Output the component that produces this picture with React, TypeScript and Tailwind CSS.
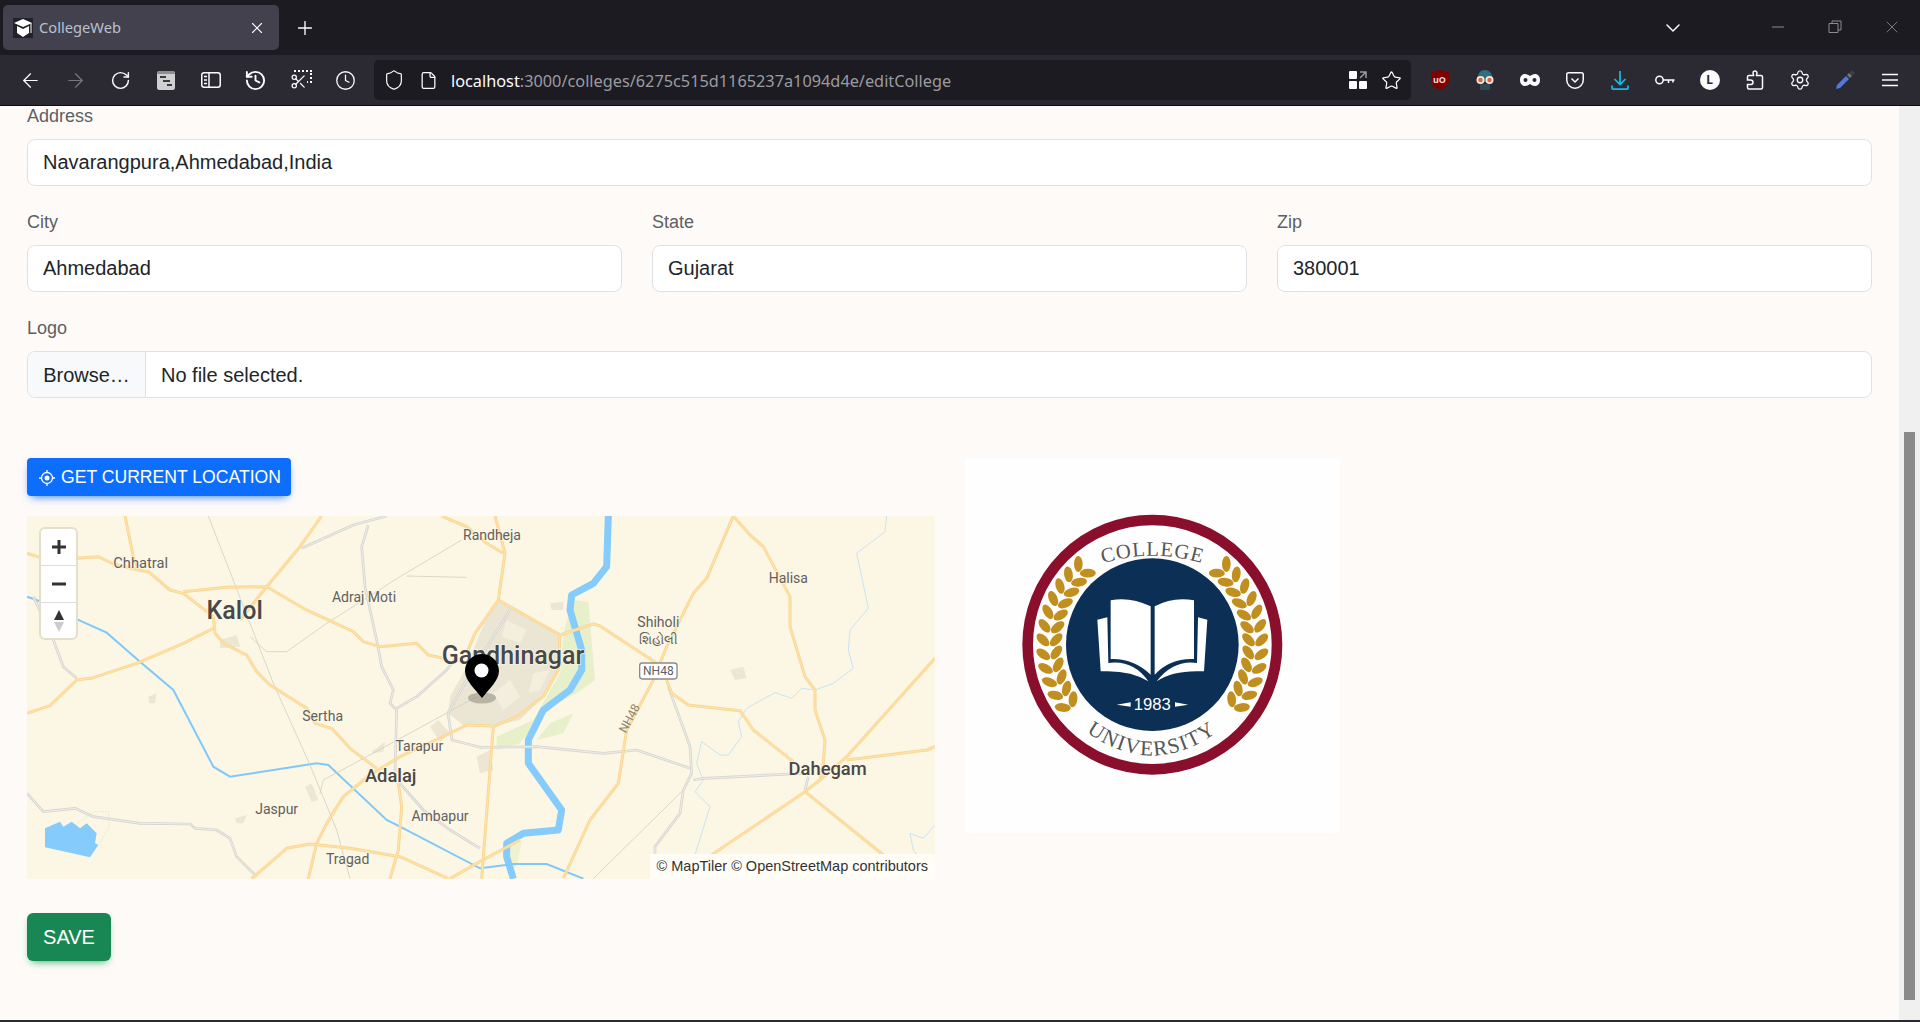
import type { ReactNode } from 'react'
import { ArrowLeft, ArrowRight, ChevronDown, Clock, File, History, Plus, RotateCw, Scissors, Settings, Shield, Star, X } from 'lucide-react'

const YELLOW_LEFT = [
  'M375,228 L400,350 L415,390 L445,395 L510,450 L550,460 L640,530',
  'M81,340 L130,355 L230,355 L295,350 L340,372 L415,390',
  'M965,228 L900,320 L800,440 L720,540',
  'M550,455 L680,442 L800,440 L910,505 L1060,575 L1090,605 L1140,620 L1250,610 L1285,645 L1330,655',
  'M81,820 L150,797 L230,720 L280,713 L410,670 L550,610 L640,565',
  'M640,530 L645,580 L670,610 L740,645 L770,695 L810,735 L920,805 L945,850 L995,865 L1050,925 L1130,985',
  'M1110,1005 L1200,950 L1340,885 L1400,855 L1476,858',
  'M1110,1005 L1030,1070 L980,1150 L950,1210 L925,1316',
  'M1195,1030 L1205,1100 L1195,1230 L1170,1316',
  'M755,1316 L860,1225 L930,1212 L1050,1225 L1200,1250 L1345,1316',
  'M1560,1200 L1440,1265 L1350,1316',
  'M1325,228 L1400,260 L1460,310 L1510,340',
  'M1485,228 L1515,340 L1495,480',
  'M1495,480 L1680,585 L1675,690 L1630,770 L1550,830 L1480,860',
  'M1495,480 L1425,580 L1400,640',
  'M1480,860 L1445,1316',
]

const YELLOW_RIGHT = [
  'M760,48 L680,235 L640,280 L560,440 L520,540 L440,690 L415,850 L330,960 L250,1135',
  'M760,48 L810,105 L850,140 L930,290 L930,380 L975,530 L1005,570 L1005,630 L1035,720 L1030,790 L1020,840 L975,875 L680,1075 L620,1135',
  'M240,405 L340,372 L360,378 L530,490',
  'M560,540 L575,580 L625,615 L780,632 L820,690 L940,785',
  'M975,875 L1210,1065 L1335,1135',
  'M1365,475 L1100,770 L1020,840',
  'M1100,780 L1340,750 L1365,740',
]

const GREY_ROADS = [
  'M1160,228 L1060,255 L905,325',
  'M1105,255 L1085,320 L1095,440 L1130,600 L1145,680 L1180,750 L1170,790 L1190,810 L1185,1000',
  'M1190,805 L1250,770 L1340,690 L1370,650',
  'M81,1060 L130,1115 L225,1105 L280,1130 L420,1150 L570,1152 L585,1165 L650,1170 L690,1195 L710,1250 L770,1310',
  'M100,470 L160,600 L190,680 L230,715',
  'M1200,1030 L1270,1110 L1350,1170 L1440,1225',
  'M1530,510 L1395,729 L1344,819 L1356,900 L1440,922',
  'M1440,922 L1610,920 L1810,940 L1910,930 L2070,985',
  'M2005,740 L2070,920 L2075,1000 L2050,1050 L2040,1120 L1965,1220 L1965,1316',
  'M2080,1020 L2110,1015 L2410,1000',
  'M2415,1050 L2425,1010',
]

const THIN_ROADS = [
  'M625,228 L820,730 L930,975 L1010,1170 L1050,1316',
  'M1385,300 L1200,410 L980,550 L860,635 L800,635 L750,590',
  'M1220,408 L1400,412',
  'M1430,770 L1100,950 L970,1020 L960,1060',
  'M2050,1050 L1780,1316',
]

const STREAMS = [
  'M2660,228 L2655,275 L2570,340 L2585,410 L2605,505 L2550,570 L2545,630 L2560,685 L2500,730 L2445,750 L2405,745 L2375,775 L2325,758 L2240,805 L2215,845 L2225,890 L2185,945 L2160,945 L2105,905 L2090,970 L2110,1020 L2085,1055 L2130,1100 L2080,1260 L2010,1310',
  'M2805,1155 L2770,1195 L2730,1180 L2740,1230 L2775,1280',
]

const TOWNS = [
  { name: 'Chhatral', x: 422, y: 368, size: 44 },
  { name: 'Kalol', x: 704, y: 512, size: 75, dark: true },
  { name: 'Adraj Moti', x: 1092, y: 470, size: 42 },
  { name: 'Sertha', x: 968, y: 829, size: 42 },
  { name: 'Tarapur', x: 1258, y: 917, size: 42 },
  { name: 'Adalaj', x: 1172, y: 1008, size: 55, dark: true },
  { name: 'Jaspur', x: 830, y: 1106, size: 42 },
  { name: 'Ambapur', x: 1320, y: 1127, size: 42 },
  { name: 'Tragad', x: 1043, y: 1258, size: 42 },
  { name: 'Randheja', x: 1476, y: 285, size: 42 },
  { name: 'Gandhinagar', x: 1539, y: 645, size: 75, dark: true },
  { name: 'Halisa', x: 2365, y: 414, size: 42 },
  { name: 'Shiholi', x: 1975, y: 545, size: 42 },
  { name: 'શિહોલી', x: 1975, y: 598, size: 40 },
  { name: 'Dahegam', x: 2483, y: 986, size: 55, dark: true },
]

function MapDrawing() {
  return (
    <svg viewBox="81 228 2724 1089" className="block h-[363px] w-[908px]">
      <rect x="81" y="228" width="2724" height="1089" fill="#fcf7e4" />
      {/* land use */}
      <path d="M1720,480 L1765,485 L1785,720 L1730,760 L1630,810 L1600,860 L1560,910 L1490,930 L1490,890 L1600,840 L1680,700 L1690,580 Z" fill="#e7f0cb" />
      <path d="M1650,850 L1720,820 L1690,880 L1610,900 Z" fill="#e7f0cb" />
      <path d="M1530,1210 L1565,1205 L1550,1280 L1525,1290 Z" fill="#eef2d0" />
      <path d="M1494,480 L1680,579 L1674,699 L1620,780 L1560,840 L1476,858 L1389,855 L1344,819 L1350,770 L1400,680 L1460,530 Z" fill="#ebe5d3" />
      <path d="M1520,540 L1580,570 L1560,610 L1505,590 Z M1600,700 L1650,690 L1620,750 L1585,760 Z M1480,760 L1530,720 L1560,770 L1510,810 Z" fill="#f3eedd" />
      <path d="M1290,860 L1315,840 L1350,880 L1320,905 Z M1115,935 L1155,905 L1150,935 L1120,940 Z M1430,950 L1470,930 L1480,990 L1440,1000 Z M660,600 L710,585 L720,620 L660,625 Z M445,770 L470,760 L465,790 L448,790 Z M915,1040 L935,1030 L955,1080 L935,1085 Z M705,1135 L740,1125 L730,1150 L710,1150 Z M2190,690 L2230,680 L2240,715 L2205,720 Z" fill="#ece6d3" />
      <path d="M1650,490 L1690,485 L1690,510 L1655,510 Z" fill="#ece6d3" />
      {/* water */}
      <path d="M135,1165 L180,1145 L190,1160 L215,1145 L240,1165 L260,1150 L290,1180 L285,1210 L295,1215 L270,1252 L135,1222 Z" fill="#85cbfb" />
      <path d="M225,1155 L280,1115 L325,1115 L328,1160 L295,1215" fill="none" stroke="#c9e3a8" strokeWidth="2" strokeDasharray="4 4" />
      {STREAMS.map((d) => <path key={d} d={d} fill="none" stroke="#c8e4f4" strokeWidth="3" />)}
      <path d="M1825,228 L1820,380 L1780,430 L1715,465 L1710,510 L1745,630 L1745,690 L1710,750 L1630,810 L1585,900 L1585,970 L1685,1110 L1675,1170 L1570,1180 L1520,1210 L1520,1250 L1540,1316" fill="none" stroke="#85cbfb" strokeWidth="21" strokeLinejoin="round" />
      <path d="M81,470 L110,480 L225,535 L320,578 L420,665 L520,750 L640,980 L690,1010 L950,970 L985,975 L1160,1140 L1200,1160 L1440,1285 L1540,1272 L1640,1272 L1750,1316" fill="none" stroke="#80c8f8" strokeWidth="6" />
      {/* roads */}
      {THIN_ROADS.map((d) => <path key={d} d={d} fill="none" stroke="#d2d0c4" strokeWidth="2.5" />)}
      {GREY_ROADS.map((d) => (
        <g key={d}>
          <path d={d} fill="none" stroke="#d4d4d2" strokeWidth="8" strokeLinejoin="round" />
          <path d={d} fill="none" stroke="#f0eee6" strokeWidth="3" strokeLinejoin="round" />
        </g>
      ))}
      {YELLOW_LEFT.map((d) => (
        <g key={d}>
          <path d={d} fill="none" stroke="#f8d694" strokeWidth="9" strokeLinejoin="round" />
          <path d={d} fill="none" stroke="#ffe2a6" strokeWidth="4" strokeLinejoin="round" />
        </g>
      ))}
      <g transform="translate(1440 180)">
        {YELLOW_RIGHT.map((d) => (
          <g key={d}>
            <path d={d} fill="none" stroke="#f8d694" strokeWidth="9" strokeLinejoin="round" />
            <path d={d} fill="none" stroke="#ffe2a6" strokeWidth="4" strokeLinejoin="round" />
          </g>
        ))}
      </g>
      {/* labels */}
      {TOWNS.map((t) => (
        <text
          key={t.name}
          x={t.x}
          y={t.y}
          dy=".35em"
          textAnchor="middle"
          fontFamily="Roboto, 'Noto Sans', sans-serif"
          fontSize={t.size}
          fontWeight={t.dark ? 500 : 400}
          fill={t.dark ? '#484848' : '#606060'}
          stroke="#fcf7e4"
          strokeOpacity=".8"
          strokeWidth="5"
          paintOrder="stroke"
        >
          {t.name}
        </text>
      ))}
      <rect x="1919" y="669" width="112" height="48" rx="8" fill="#fff" stroke="#8b8b8b" strokeWidth="4" />
      <text x="1975" y="693" dy=".35em" textAnchor="middle" fontFamily="Roboto, sans-serif" fontSize="36" fill="#5f5f5f">NH48</text>
      <text x="1888" y="835" dy=".35em" textAnchor="middle" fontFamily="Roboto, sans-serif" fontSize="36" fill="#8d8672" transform="rotate(-62 1888 835)">NH48</text>
    </svg>
  )
}

function ZoomControls() {
  return (
    <div className="absolute left-[12px] top-[11px] flex w-[39px] flex-col rounded-[6px] border-2 border-[#e4dfcd] bg-white">
      <div className="flex h-[37px] items-center justify-center border-b border-[#ddd]">
        <svg width="16" height="16" viewBox="0 0 16 16"><path d="M8 1v14M1 8h14" stroke="#333" strokeWidth="3" /></svg>
      </div>
      <div className="flex h-[37px] items-center justify-center border-b border-[#ddd]">
        <svg width="16" height="16" viewBox="0 0 16 16"><path d="M1 8h14" stroke="#333" strokeWidth="3" /></svg>
      </div>
      <div className="flex h-[35px] items-center justify-center">
        <svg width="12" height="24" viewBox="0 0 12 24">
          <path d="M6 1l5 10H1z" fill="#333" />
          <path d="M6 23l5-10H1z" fill="#ccc" />
        </svg>
      </div>
    </div>
  )
}

function MapPin() {
  return (
    <svg className="absolute left-[433px] top-[136px]" width="44" height="52" viewBox="0 0 44 52">
      <ellipse cx="22" cy="46" rx="14" ry="5.5" fill="#8f8a78" opacity=".55" />
      <path d="M22 2C12.6 2 5 9.6 5 19c0 9.5 10 18 17 27 7-9 17-17.500 17-27C39 9.600 31.400 2 22 2z" fill="#000" />
      <circle cx="21.500" cy="18.500" r="7" fill="#fff" />
    </svg>
  )
}

function CollegeLogo() {
  const leaves: ReactNode[] = []
  for (let i = 0; i < 12; i++) {
    const deg = 136 + i * 7.500
    const a = (deg * Math.PI) / 180
    const sx = 577 + 308 * Math.cos(a)
    const sy = 585 - 308 * Math.sin(a)
    const up = 180 - deg
    leaves.push(
      <g key={i}>
        <ellipse cx="0" cy="-28" rx="13" ry="24" fill="#c08f1f" transform={`translate(${sx} ${sy}) rotate(${up - 45})`} />
        <ellipse cx="0" cy="-28" rx="13" ry="24" fill="#c08f1f" transform={`translate(${sx} ${sy}) rotate(${up + 45})`} />
      </g>,
    )
  }

  return (
    <svg viewBox="15 25 1125 1125" className="h-[375px] w-[375px] bg-[#fefefe]">
      <circle cx="577" cy="585" r="374" fill="none" stroke="#8a0f2d" strokeWidth="32" />
      <circle cx="577" cy="585" r="259" fill="#0c2f55" />
      <g>{leaves}</g>
      <g transform="matrix(-1 0 0 1 1154 0)">{leaves}</g>
      <path d="M452,452 Q510,440 572,470 L572,675 Q520,625 452,628 Z M702,452 Q640,440 584,470 L584,675 Q630,625 702,628 Z" fill="#fff" />
      <path d="M412,510 L442,503 L445,640 Q520,630 565,695 Q510,660 422,665 Z M742,510 L714,503 L711,640 Q640,630 590,695 Q640,660 732,665 Z" fill="#fff" />
      <text x="577" y="780" textAnchor="middle" fontFamily="'Liberation Sans', sans-serif" fontSize="50" fill="#fff">1983</text>
      <path d="M470,765 L512,758 L512,771 Z M685,765 L645,758 L645,771 Z" fill="#fff" />
      <path id="college-arc" d="M415,345 Q577,292 740,345" fill="none" />
      <path id="university-arc" d="M350,825 Q577,1010 800,825" fill="none" />
      <text fontFamily="'Liberation Serif', serif" fontSize="62" fill="#555" letterSpacing="3">
        <textPath href="#college-arc" startOffset="50%" textAnchor="middle">COLLEGE</textPath>
      </text>
      <text fontFamily="'Liberation Serif', serif" fontSize="64" fill="#555" letterSpacing="4">
        <textPath href="#university-arc" startOffset="50%" textAnchor="middle">UNIVERSITY</textPath>
      </text>
    </svg>
  )
}

function ToolIcon({ children }: { children: ReactNode }) {
  return <div className="flex h-[50px] w-[45px] shrink-0 items-center justify-center text-[#fbfbfe]">{children}</div>
}

function TabStrip() {
  return (
    <div className="flex h-[55px] shrink-0 items-start bg-[#1c1b22]">
      <div className="ml-[3px] mt-[5px] flex h-[45px] w-[276px] items-center rounded-[5px] bg-[#42414d] pl-[10px] pr-[13px]">
        <svg width="20" height="20" viewBox="0 0 20 20" className="shrink-0">
          <rect width="20" height="20" fill="#20242a" />
          <path d="M10 1l9 4-9 4-9-4z" fill="#fff" />
          <path d="M4 8l6 3 6-3v7l-6 4-6-4z" fill="#fff" />
          <path d="M18 5v10" stroke="#fff" />
        </svg>
        <span className="ml-[6px] flex-1 text-[14.700px] text-[#b9c1cf]">CollegeWeb</span>
        <X size={18} strokeWidth={1.500} className="text-[#fbfbfe]" />
      </div>
      <div className="ml-[12px] mt-[14px] flex h-[28px] w-[28px] items-center justify-center text-[#fbfbfe]">
        <Plus size={22} strokeWidth={1.500} />
      </div>
      <div className="flex-1" />
      <div className="mr-[64px] mt-[16px] text-[#fbfbfe]">
        <ChevronDown size={24} strokeWidth={1.500} />
      </div>
      <div className="mt-[17px] flex text-[#8c8c8c]">
        <div className="flex w-[57px] justify-center"><svg width="14" height="20" viewBox="0 0 14 20"><path d="M1 10h12" stroke="currentColor" /></svg></div>
        <div className="flex w-[57px] justify-center"><svg width="14" height="20" viewBox="0 0 14 20" fill="none"><path d="M1 6.500h9v9H1zM4 6.500V4h9v9h-3" stroke="currentColor" /></svg></div>
        <div className="flex w-[57px] justify-center"><X size={20} strokeWidth={1} /></div>
      </div>
    </div>
  )
}

function Toolbar() {
  return (
    <div className="flex h-[51px] shrink-0 items-start border-b border-[#0c0c0d] bg-[#2b2a33] pl-[8px]">
      <ToolIcon><ArrowLeft size={23} strokeWidth={1.300} /></ToolIcon>
      <ToolIcon><ArrowRight size={23} strokeWidth={1.300} className="text-[#77767c]" /></ToolIcon>
      <ToolIcon><RotateCw size={21} strokeWidth={1.700} /></ToolIcon>
      <ToolIcon>
        <svg width="18" height="19" viewBox="0 0 18 19">
          <rect width="18" height="19" rx="2.500" fill="#cfcfd1" />
          <path d="M0 2.500A2.500 2.500 0 0 1 2.500 0h13A2.500 2.500 0 0 1 18 2.500V3H0z" fill="#8e8e92" />
          <path d="M3 5h6v2H3zM6 9h7v2H6zM10 13h5v2h-5z" fill="#3a3a42" />
        </svg>
      </ToolIcon>
      <ToolIcon>
        <svg width="20" height="16" viewBox="0 0 20 16" fill="none" stroke="currentColor" strokeWidth="1.500">
          <rect x=".750" y=".750" width="18.500" height="14.500" rx="2.500" />
          <path d="M8 1v14M3 4.500h3M3 8h3M3 11.500h3" />
        </svg>
      </ToolIcon>
      <ToolIcon><History size={23} strokeWidth={2} /></ToolIcon>
      <ToolIcon>
        <span className="relative block h-[20px] w-[22px]">
          <span className="absolute right-0 top-0 h-[13px] w-[18px] border-2 border-dotted border-[#fbfbfe]" />
          <Scissors size={17} strokeWidth={1.750} className="absolute bottom-0 left-0 bg-[#2b2a33]" />
        </span>
      </ToolIcon>
      <ToolIcon><Clock size={21} strokeWidth={1.500} /></ToolIcon>

      <div className="ml-[6px] mt-[5px] flex h-[40px] w-[1037px] items-center rounded-[5px] bg-[#1c1b22] pl-[9px] pr-[9px]">
        <Shield size={22} strokeWidth={1.300} className="text-[#fbfbfe]" />
        <File size={19} strokeWidth={1.600} className="ml-[14px] text-[#fbfbfe]" />
        <span className="ml-[13px] flex-1 pt-[3px] text-[16.300px] text-[#9b9ba0]">
          <span className="text-[#fbfbfe]">localhost</span>:3000/colleges/6275c515d1165237a1094d4e/editCollege
        </span>
        <svg width="18" height="18" viewBox="0 0 18 18" fill="#fbfbfe">
          <rect width="8" height="8" rx="1" />
          <rect y="10" width="8" height="8" rx="1" />
          <rect x="10" y="10" width="8" height="8" rx="1" />
          <path d="M11 1h6v6M17 1l-6 6" fill="none" stroke="#9b9ba0" strokeWidth="1.500" />
        </svg>
        <Star size={21} strokeWidth={1.400} className="ml-[14px] text-[#fbfbfe]" />
      </div>

      <div className="ml-[6px] flex">
        <ToolIcon>
          <span className="relative flex h-[20px] w-[18px] items-center justify-center">
            <svg width="18" height="20" viewBox="0 0 18 20" className="absolute inset-0">
              <path d="M9 0l9 2.500v8C18 15 13 18.500 9 20 5 18.500 0 15 0 10.500v-8z" fill="#800000" />
            </svg>
            <span className="relative text-[9px] font-bold text-[#e9d6d6]">uO</span>
          </span>
        </ToolIcon>
        <ToolIcon>
          <svg width="20" height="22" viewBox="0 0 20 22">
            <path d="M2 13C2 5 5 1 10 1s8 4 8 12z" fill="#2f6f80" />
            <path d="M5 15h10v6H5z" fill="#2e4b55" />
            <circle cx="5.500" cy="11" r="4" fill="#f2e7dc" />
            <circle cx="14.500" cy="11" r="4" fill="#f2e7dc" />
            <circle cx="5.500" cy="11" r="2.200" fill="#e0613a" />
            <circle cx="14.500" cy="11" r="2.200" fill="#e0613a" />
          </svg>
        </ToolIcon>
        <ToolIcon>
          <svg width="20" height="12" viewBox="0 0 20 12">
            <path d="M5 0c2 0 3.500 1 5 2 1.500-1 3-2 5-2 3 0 5 2.500 5 6s-2 6-5 6c-2 0-3.500-1-5-2-1.500 1-3 2-5 2-3 0-5-2.500-5-6s2-6 5-6z" fill="#fbfbfe" />
            <circle cx="5.500" cy="6" r="2" fill="#2b2a33" />
            <circle cx="14.500" cy="6" r="2" fill="#2b2a33" />
          </svg>
        </ToolIcon>
        <ToolIcon>
          <svg width="18" height="17" viewBox="0 0 18 17" fill="none" stroke="currentColor" strokeWidth="1.500">
            <path d="M2.500.750h13c1 0 1.750.750 1.750 1.750V8c0 4.500-3.700 8.250-8.250 8.250S.750 12.500.750 8V2.500c0-1 .750-1.750 1.750-1.750z" />
            <path d="M5.500 6.500L9 10l3.500-3.500" />
          </svg>
        </ToolIcon>
        <ToolIcon>
          <svg width="18" height="19" viewBox="0 0 18 19" fill="none" stroke="#10bfe9" strokeWidth="1.700">
            <path d="M9 0v13M3.500 8L9 13.500 14.500 8M1 14.500v2.500c0 .800.500 1.200 1.200 1.200h13.600c.700 0 1.200-.400 1.200-1.200v-2.500" />
          </svg>
        </ToolIcon>
        <ToolIcon>
          <svg width="20" height="10" viewBox="0 0 20 10" fill="none" stroke="currentColor" strokeWidth="1.500">
            <circle cx="4.500" cy="5" r="3.700" />
            <path d="M8 5h11.500M13.500 5v3M18 5v2.500" />
          </svg>
        </ToolIcon>
        <ToolIcon>
          <span className="flex h-[20px] w-[20px] items-center justify-center rounded-full bg-[#fbfbfe] text-[12px] font-bold text-[#2b2a33]">L</span>
        </ToolIcon>
        <ToolIcon>
          <svg width="18" height="20" viewBox="0 0 18 20" fill="none" stroke="currentColor" strokeWidth="1.500">
            <path d="M7.500 1.500c1.500-1 3.500-.200 3.500 1.500 0 .800-.500 1.300-.500 2.500H15c1 0 1.500.700 1.500 1.500v10.500c0 1-.700 1.500-1.500 1.500H3c-1 0-1.500-.500-1.500-1.500V14.500H5c1.500 0 2-1.200 2-2.200S6 10 4.500 10H1.500V7c0-1 .500-1.500 1.500-1.500h4.500c0-1.500-1-2.800 0-4z" />
          </svg>
        </ToolIcon>
        <ToolIcon><Settings size={22} strokeWidth={1.400} /></ToolIcon>
        <ToolIcon>
          <svg width="20" height="20" viewBox="0 0 20 20">
            <path d="M1 19l1-4L11 6l3 3-9 9z" fill="#4f78d8" />
            <path d="M12 5l2-2 3 3-2 2z" fill="#777" />
            <path d="M14 3l3-3 3 3-3 3z" fill="#3d3d42" />
          </svg>
        </ToolIcon>
        <ToolIcon>
          <svg width="16" height="14" viewBox="0 0 16 14"><path d="M0 1.500h16M0 7h16M0 12.500h16" stroke="#fbfbfe" strokeWidth="1.500" /></svg>
        </ToolIcon>
      </div>
    </div>
  )
}

function Field({ label, value, className }: { label: string; value: string; className?: string }) {
  return (
    <div className={className}>
      <label className="mb-[10px] block text-[18px] leading-[25px] text-[#5c5f63]">{label}</label>
      <input
        readOnly
        value={value}
        className="block h-[47px] w-full rounded-[8px] border border-[#dee2e6] bg-white px-[15px] text-[20px] text-[#212529] outline-none"
      />
    </div>
  )
}

export default function App() {
  return (
    <div className="flex h-[1022px] w-[1920px] flex-col overflow-hidden bg-[#2b2a33] font-['Liberation_Sans',Arial,sans-serif]">
      <div className="font-['Noto_Sans',sans-serif]">
        <TabStrip />
        <Toolbar />
      </div>

      <div className="flex h-[914px] shrink-0">
        <main className="w-[1899px] overflow-hidden bg-[#fefaf8] px-[27px]">
          <Field label="Address" value="Navarangpura,Ahmedabad,India" className="-mt-[2px]" />

          <div className="mt-[24px] grid grid-cols-3 gap-[30px]">
            <Field label="City" value="Ahmedabad" />
            <Field label="State" value="Gujarat" />
            <Field label="Zip" value="380001" />
          </div>

          <div className="mt-[24px]">
            <label className="mb-[10px] block text-[18px] leading-[25px] text-[#5c5f63]">Logo</label>
            <div className="flex h-[47px] items-center overflow-hidden rounded-[8px] border border-[#dee2e6] bg-white text-[20px] text-[#212529]">
              <div className="flex h-full w-[118px] items-center justify-center border-r border-[#dee2e6] bg-[#f8f9fa]">Browse…</div>
              <span className="ml-[15px]">No file selected.</span>
            </div>
          </div>

          <div className="mt-[60px] flex gap-[30px]">
            <div className="w-[908px]">
              <button className="flex h-[38px] w-[264px] items-center rounded-[4px] bg-[#0d6efd] pl-[12px] text-[17.600px] text-white shadow-[0_4px_9px_-4px_#0d6efd]">
                <svg width="16" height="16" viewBox="0 0 16 16" fill="none" stroke="#fff" className="mr-[6px] mt-[2px]">
                  <circle cx="8" cy="8" r="5.500" strokeWidth="1.300" />
                  <circle cx="8" cy="8" r="2.500" fill="#fff" stroke="none" />
                  <path d="M8 0v2.500M8 13.500V16M0 8h2.500M13.500 8H16" strokeWidth="1.300" />
                </svg>
                GET CURRENT LOCATION
              </button>
              <div className="relative mt-[20px] h-[363px] overflow-hidden">
                <MapDrawing />
                <ZoomControls />
                <MapPin />
                <div className="absolute bottom-0 right-0 flex h-[25px] items-center bg-[#fffdf5] px-[7px] pt-[1px] text-[14.500px] text-[#333]">
                  © MapTiler © OpenStreetMap contributors
                </div>
              </div>
            </div>
            <CollegeLogo />
          </div>

          <button className="mt-[34px] h-[48px] w-[84px] rounded-[6px] bg-[#198754] text-[20px] text-white shadow-[0_4px_9px_-4px_#14a44d]">SAVE</button>
        </main>

        <div className="flex w-[21px] justify-center bg-[#f0f0f0] pt-[326px]">
          <div className="h-[568px] w-[11px] bg-[#8a8a8a]" />
        </div>
      </div>
    </div>
  )
}
